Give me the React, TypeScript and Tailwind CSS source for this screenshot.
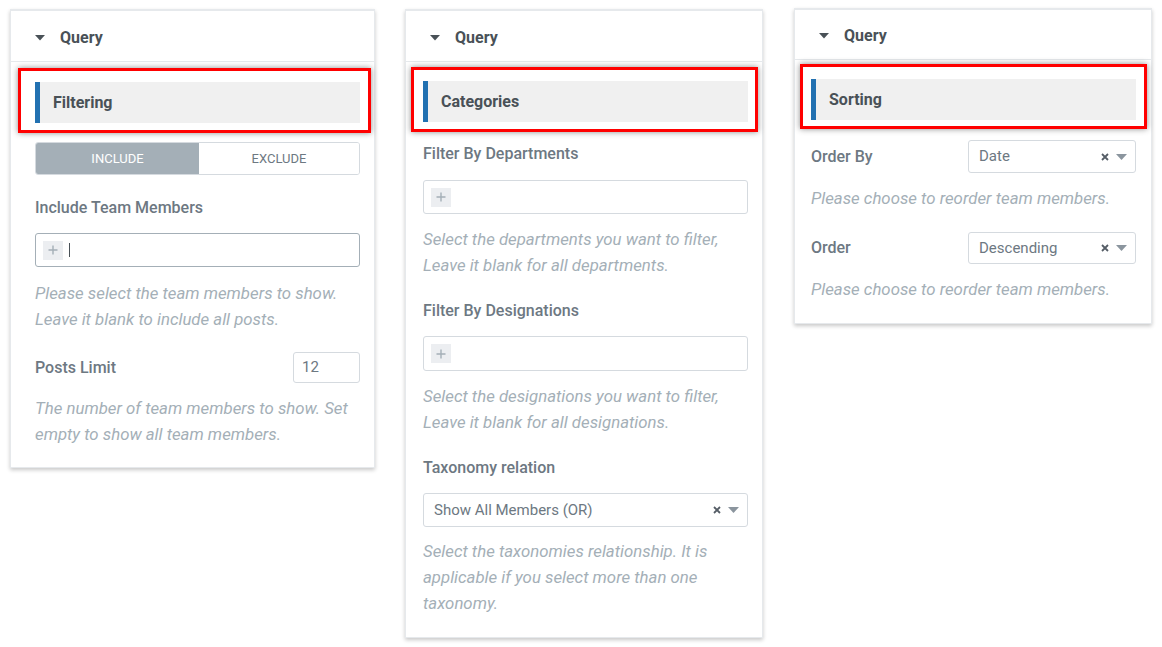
import React from "react";

const font = { fontFamily: "Roboto, 'Liberation Sans', sans-serif" };

function Caret() {
  return (
    <svg width="10" height="6" viewBox="0 0 10 6" className="shrink-0">
      <path d="M0 0 L10 0 L5 5.5 Z" fill="#495157" />
    </svg>
  );
}

function PanelHeader({ h = "h-[51px]" }: { h?: string }) {
  return (
    <div className={`flex items-center border-b border-[#e6e9ec] pt-[3px] ${h}`}>
      <div className="ml-[24px] mr-[15px]">
        <Caret />
      </div>
      <span className="text-[16px] font-bold text-[#495157]">Query</span>
    </div>
  );
}

interface SectionProps {
  title: string;
  box: string;
}

// section bar with the red annotation box on top
function SectionBar({ title, box }: SectionProps) {
  return (
    <div className="relative">
      <div className="flex h-[41px] items-center border-l-[5px] border-[#2271b1] bg-[#f0f0f0] pl-[13px]">
        <span className="text-[16px] font-bold text-[#495157]">{title}</span>
      </div>
      <div
        className={`pointer-events-none absolute border-[3px] border-[#ff0000] shadow-[0_0_6px_rgba(0,0,0,0.45)] ${box}`}
      />
    </div>
  );
}

function PlusTile() {
  return (
    <div className="flex h-[19px] w-[20px] items-center justify-center bg-[#eceef1]">
      <svg width="10" height="10" viewBox="0 0 10 10">
        <path d="M5 0.5 V9.5 M0.5 5 H9.5" stroke="#a4afb7" strokeWidth="1.4" />
      </svg>
    </div>
  );
}

function Label({ children, className = "" }: { children: React.ReactNode; className?: string }) {
  return (
    <div className={`text-[16px] font-medium leading-[20px] text-[#6d7882] ${className}`}>{children}</div>
  );
}

function Desc({ children, className = "" }: { children: React.ReactNode; className?: string }) {
  return (
    <div className={`text-[16.8px] italic leading-[26px] text-[#a4afb7] ${className}`}>{children}</div>
  );
}

function SelectBox({ value, className = "" }: { value: string; className?: string }) {
  return (
    <div
      className={`flex items-center rounded-[3px] border border-[#d5dadf] bg-white pl-[10px] pr-[8px] ${className}`}
    >
      <span className="flex-1 text-[15px] text-[#6d7882]">{value}</span>
      <svg width="8" height="8" viewBox="0 0 8 8" className="mr-[7px]">
        <path d="M1 1 L7 7 M7 1 L1 7" stroke="#555d66" strokeWidth="1.8" />
      </svg>
      <svg width="11" height="6" viewBox="0 0 11 6">
        <path d="M0 0 H11 L5.5 6 Z" fill="#8b959e" />
      </svg>
    </div>
  );
}

function Panel({ children, className = "" }: { children: React.ReactNode; className?: string }) {
  return (
    <div
      className={`shrink-0 border border-[#e6e9ec] border-t-[2px] bg-white shadow-[0_2px_4px_rgba(0,0,0,0.22)] ${className}`}
    >
      {children}
    </div>
  );
}

export default function App() {
  return (
    <div className="flex h-[647px] w-[1162px] items-start bg-white" style={font}>
      {/* Filtering */}
      <Panel className="ml-[10px] mt-[9px] w-[365px]">
        <PanelHeader />
        <div className="pb-[20px] pl-[24px] pr-[14px] pt-[20px]">
          <SectionBar title="Filtering" box="-left-[17px] -right-[11px] -top-[14px] -bottom-[10px]" />
          <div className="mt-[19px] flex h-[33px] overflow-hidden rounded-[3px] border border-[#d5dadf] text-[13px] uppercase">
            <div className="flex w-[163px] items-center justify-center bg-[#a4afb7] text-white">Include</div>
            <div className="flex flex-1 items-center justify-center bg-white text-[#6d7882]">Exclude</div>
          </div>
          <Label className="mt-[23px]">Include Team Members</Label>
          <div className="mt-[15px] flex h-[34px] items-center rounded-[3px] border border-[#a4afb7] pl-[7px]">
            <PlusTile />
            <div className="ml-[6px] h-[14px] w-px bg-[#495157]" />
          </div>
          <Desc className="mt-[13px]">
            Please select the team members to show.
            <br />
            Leave it blank to include all posts.
          </Desc>
          <div className="mt-[20px] flex items-center justify-between">
            <Label>Posts Limit</Label>
            <div className="flex h-[31px] w-[67px] items-center rounded-[3px] border border-[#d5dadf] pl-[8px] text-[15px] text-[#6d7882]">
              12
            </div>
          </div>
          <Desc className="mt-[12px]">
            The number of team members to show. Set
            <br />
            empty to show all team members.
          </Desc>
        </div>
      </Panel>

      {/* Categories */}
      <Panel className="ml-[30px] mt-[9px] w-[358px]">
        <PanelHeader h="h-[51px]" />
        <div className="pb-[21px] pl-[17px] pr-[14px] pt-[19px]">
          <SectionBar title="Categories" box="-left-[12px] -right-[10px] -top-[14px] -bottom-[10px]" />
          <Label className="mt-[22px]">Filter By Departments</Label>
          <div className="mt-[16px] flex h-[34px] items-center rounded-[3px] border border-[#d5dadf] pl-[7px]">
            <PlusTile />
          </div>
          <Desc className="mt-[12px]">
            Select the departments you want to filter,
            <br />
            Leave it blank for all departments.
          </Desc>
          <Label className="mt-[23px]">Filter By Designations</Label>
          <div className="mt-[15px] flex h-[35px] items-center rounded-[3px] border border-[#d5dadf] pl-[7px]">
            <PlusTile />
          </div>
          <Desc className="mt-[12px]">
            Select the designations you want to filter,
            <br />
            Leave it blank for all designations.
          </Desc>
          <Label className="mt-[23px]">Taxonomy relation</Label>
          <SelectBox value="Show All Members (OR)" className="mt-[15px] h-[34px]" />
          <Desc className="mt-[11px]">
            Select the taxonomies relationship. It is
            <br />
            applicable if you select more than one
            <br />
            taxonomy.
          </Desc>
        </div>
      </Panel>

      {/* Sorting */}
      <Panel className="ml-[31px] mt-[8px] w-[358px]">
        <PanelHeader h="h-[50px]" />
        <div className="pb-[21px] pl-[16px] pr-[15px] pt-[19px]">
          <SectionBar title="Sorting" box="-left-[11px] -right-[11px] -top-[15px] -bottom-[9px]" />
          <div className="mt-[20px] flex items-center justify-between">
            <Label>Order By</Label>
            <SelectBox value="Date" className="h-[33px] w-[168px]" />
          </div>
          <Desc className="mt-[12px]">Please choose to reorder team members.</Desc>
          <div className="mt-[21px] flex items-center justify-between">
            <Label>Order</Label>
            <SelectBox value="Descending" className="h-[32px] w-[168px]" />
          </div>
          <Desc className="mt-[12px]">Please choose to reorder team members.</Desc>
        </div>
      </Panel>
    </div>
  );
}
